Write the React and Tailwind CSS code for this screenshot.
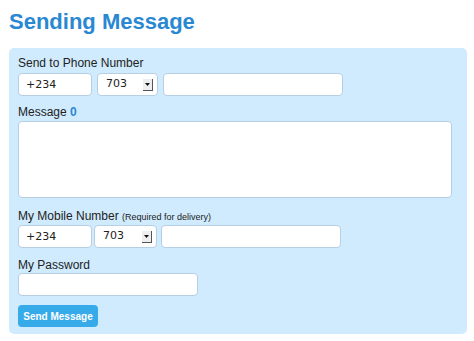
function PhoneRow({ prefixW, selectW, gap1, gap2, numberW }) {
  return (
    <div className="flex items-center">
      <input
        defaultValue="+234"
        className="h-[23px] rounded-[4px] border border-[#b7cfe2] bg-white px-[7px] text-[11px] text-[#222] outline-none"
        style={{ width: prefixW, fontFamily: '"DejaVu Sans", sans-serif' }}
      />
      <div
        className="flex h-[23px] items-center justify-between rounded-[4px] border border-[#b7cfe2] bg-white pl-[8px] pr-[4px]"
        style={{ width: selectW, marginLeft: gap1 }}
      >
        <span className="text-[11px] text-[#222]" style={{ fontFamily: '"DejaVu Sans", sans-serif' }}>703</span>
        <span className="flex h-[12px] w-[10px] items-center justify-center border-r border-b border-[#555] bg-[#eee]">
          <svg width="5" height="3" viewBox="0 0 5 3"><path d="M0 0h5L2.5 3z" fill="#111" /></svg>
        </span>
      </div>
      <input
        className="h-[23px] rounded-[4px] border border-[#b7cfe2] bg-white outline-none"
        style={{ width: numberW, marginLeft: gap2 }}
      />
    </div>
  );
}

export default function App() {
  return (
    <div className="h-[341px] w-[474px] bg-white font-['Liberation_Sans',Arial,sans-serif]">
      <h1 className="pl-[9px] pt-[9px] text-[22px] font-bold leading-[26px] text-[#2a88d2]">Sending Message</h1>

      <div className="ml-[9px] mt-[13px] h-[286px] w-[458px] rounded-[5px] bg-[#d0ebfd] px-[9px] pt-[8px]">
        <div className="text-[12px] leading-[15px] text-[#222]">Send to Phone Number</div>
        <div className="mt-[2px]">
          <PhoneRow prefixW={74} selectW={61} gap1={5} gap2={5} numberW={180} />
        </div>

        <div className="mt-[9px] text-[12px] leading-[15px] text-[#222]">
          Message <span className="font-bold text-[#2a88d2]">0</span>
        </div>
        <textarea className="mt-[1px] block h-[77px] w-[434px] resize-none rounded-[4px] border border-[#b7cfe2] bg-white outline-none" />

        <div className="mt-[11px] text-[12px] leading-[15px] text-[#222]">
          My Mobile Number <span className="text-[9px]">(Required for delivery)</span>
        </div>
        <div className="mt-[0px]">
          <PhoneRow prefixW={74} selectW={63} gap1={2} gap2={4} numberW={180} />
        </div>

        <div className="mt-[10px] text-[12px] leading-[15px] text-[#222]">My Password</div>
        <input
          type="password"
          className="mt-[0px] block h-[23px] w-[180px] rounded-[4px] border border-[#b7cfe2] bg-white outline-none"
        />

        <button className="mt-[9px] flex h-[22px] w-[80px] items-center justify-center rounded-[4px] bg-[#37aaea] text-[10px] font-bold text-white">
          Send Message
        </button>
      </div>
    </div>
  );
}
